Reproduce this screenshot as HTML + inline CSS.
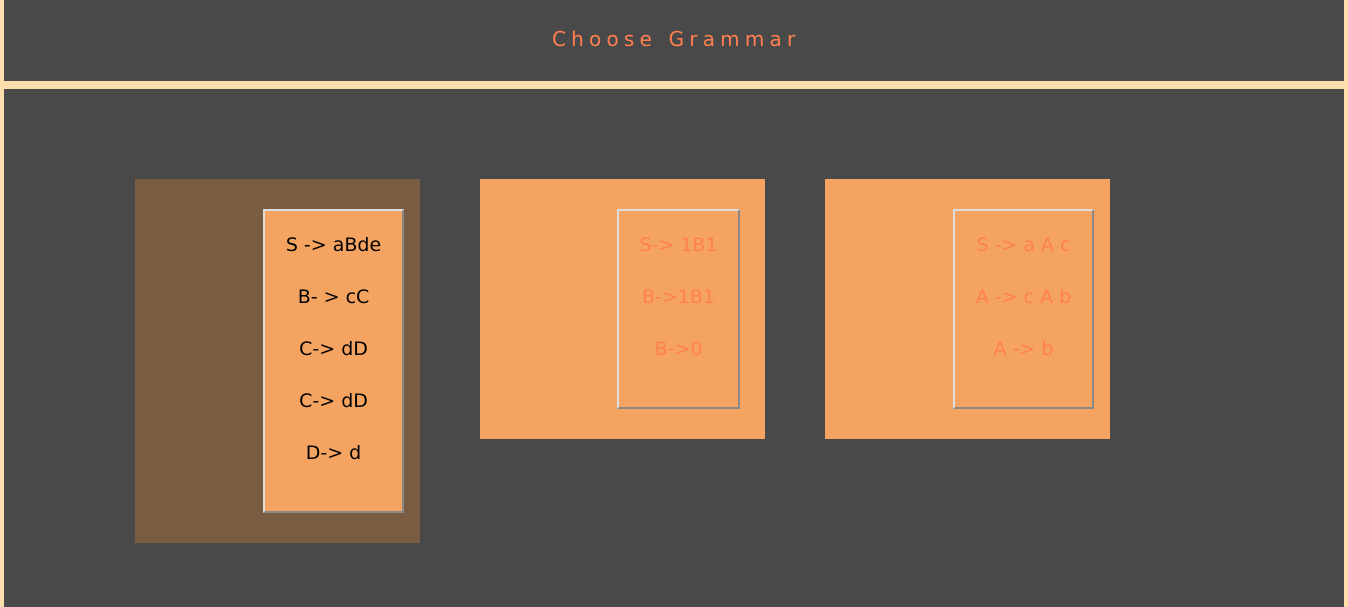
<!DOCTYPE html>
<html><head><style>
html,body{margin:0;padding:0;}
body{width:1348px;height:607px;background:#ffdead;position:relative;overflow:hidden;font-family:"DejaVu Sans","Liberation Sans",sans-serif;}
.hdr{position:absolute;left:4px;top:0;width:1340px;height:81px;background:#494949;}
.hdr span{position:absolute;left:548px;top:27px;font-size:20px;letter-spacing:5.2px;color:#ff7f50;white-space:nowrap;}
.main{position:absolute;left:4px;top:89px;width:1340px;height:518px;background:#494949;}
.card{position:absolute;top:179px;width:285px;background:#f4a460;}
.box{position:absolute;top:30px;background:#f4a460;border:2px solid;border-color:#ddd #888 #888 #ddd;box-sizing:border-box;text-align:center;font-size:19px;}
.box .l{position:absolute;left:0;right:0;line-height:1;}
</style></head><body>
<div class="hdr"><span>Choose Grammar</span></div>
<div class="main"></div>
<div class="card" style="left:135px;height:364px;background:#7a5c42;">
 <div class="box" style="left:128px;width:141px;height:304px;color:#000;">
  <div class="l" style="top:25px">S -&gt; aBde</div>
  <div class="l" style="top:77px">B- &gt; cC</div>
  <div class="l" style="top:129px">C-&gt; dD</div>
  <div class="l" style="top:181px">C-&gt; dD</div>
  <div class="l" style="top:233px">D-&gt; d</div>
 </div>
</div>
<div class="card" style="left:480px;height:260px;">
 <div class="box" style="left:137px;width:123px;height:200px;color:#ff7f50;">
  <div class="l" style="top:25px">S-&gt; 1B1</div>
  <div class="l" style="top:77px">B-&gt;1B1</div>
  <div class="l" style="top:129px">B-&gt;0</div>
 </div>
</div>
<div class="card" style="left:825px;height:260px;">
 <div class="box" style="left:128px;width:141px;height:200px;color:#ff7f50;">
  <div class="l" style="top:25px">S -&gt; a A c</div>
  <div class="l" style="top:77px">A -&gt; c A b</div>
  <div class="l" style="top:129px">A -&gt; b</div>
 </div>
</div>
</body></html>
